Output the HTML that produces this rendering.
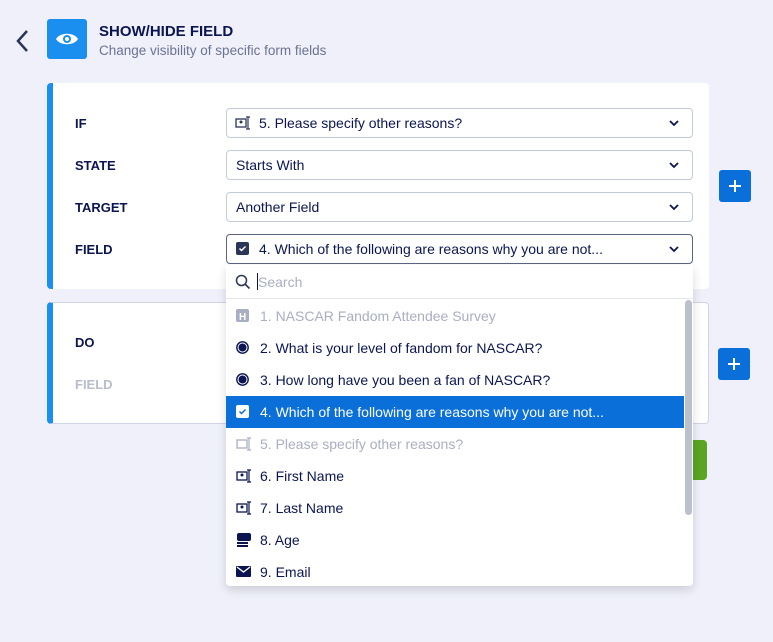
<!DOCTYPE html>
<html><head><style>
*{box-sizing:border-box;margin:0;padding:0}
body{width:773px;height:642px;background:#eff0fa;font-family:"Liberation Sans",sans-serif;color:#0a1551;position:relative;overflow:hidden}
.abs{position:absolute}
.card{position:absolute;left:47px;width:662px;background:#fff;border-radius:4px}
.lbl{position:absolute;left:75px;font-size:13px;font-weight:bold;color:#0a1551}
.sel{position:absolute;left:226px;width:467px;height:30px;border:1px solid #c3cad8;border-radius:4px;background:#fff;font-size:14px;line-height:28px;padding-left:9px;color:#0a1551}
.chev{position:absolute;right:13px;top:11px}
.plus{position:absolute;width:32px;height:32px;background:#0a6fd8;border-radius:3px}
.plus:before{content:"";position:absolute;left:10px;top:15px;width:12px;height:2px;background:#fff}
.plus:after{content:"";position:absolute;left:15px;top:10px;width:2px;height:12px;background:#fff}
.dd{position:absolute;left:226px;top:265px;width:467px;height:321px;background:#fff;border-radius:0 0 4px 4px;box-shadow:0 4px 10px rgba(0,0,0,.15);overflow:hidden}
.it{position:absolute;left:0;width:458px;height:32px;font-size:14px;line-height:32px;padding-left:34px}
.ic{position:absolute;left:10px;top:9px}
</style></head><body>
<svg class="abs" style="left:14px;top:29px" width="16" height="24"><path d="M13 2L4 12l9 10" stroke="#2a3557" stroke-width="2.5" fill="none"/></svg>
<div class="abs" style="left:47px;top:19px;width:40px;height:40px;background:#1a8ff0;border-radius:3px"></div>
<svg class="abs" style="left:55px;top:30px" width="24" height="18"><path d="M1 9C5 2 19 2 23 9C19 16 5 16 1 9Z" fill="#fff"/><circle cx="12" cy="9" r="4" fill="#1a8ff0"/><circle cx="12" cy="9" r="2" fill="#fff"/></svg>
<div class="abs" style="left:99px;top:23px;font-size:15px;font-weight:bold">SHOW/HIDE FIELD</div>
<div class="abs" style="left:99px;top:43px;font-size:13.5px;color:#6b7293">Change visibility of specific form fields</div>

<div class="card" style="top:83px;height:206px;border-left:6px solid #1a8ff0"></div>
<div class="lbl" style="top:116px">IF</div>
<div class="lbl" style="top:158px">STATE</div>
<div class="lbl" style="top:200px">TARGET</div>
<div class="lbl" style="top:242px">FIELD</div>
<div class="sel" style="top:108px;padding-left:32px"><svg class="ic" style="top:7px;left:8px" width="16" height="14"><rect x="1" y="3" width="10" height="8" fill="none" stroke="#2a3557" stroke-width="1.3"/><path d="M13 1v12M11 1h4M11 13h4" stroke="#2a3557" stroke-width="1.2"/><circle cx="6" cy="6" r="1.5" fill="#2a3557"/></svg>5. Please specify other reasons?<svg class="chev" width="10" height="7"><path d="M1 1l4 4 4-4" stroke="#0a1551" stroke-width="1.8" fill="none"/></svg></div>
<div class="sel" style="top:150px">Starts With<svg class="chev" width="10" height="7"><path d="M1 1l4 4 4-4" stroke="#0a1551" stroke-width="1.8" fill="none"/></svg></div>
<div class="sel" style="top:192px">Another Field<svg class="chev" width="10" height="7"><path d="M1 1l4 4 4-4" stroke="#0a1551" stroke-width="1.8" fill="none"/></svg></div>
<div class="sel" style="top:234px;border-color:#5c6484;padding-left:32px"><svg class="ic" style="top:7px;left:9px" width="14" height="14"><rect width="13" height="13" rx="2" fill="#2a3557"/><path d="M3.5 6.5l2 2 4-4" stroke="#fff" stroke-width="1.5" fill="none"/></svg>4. Which of the following are reasons why you are not...<svg class="chev" width="10" height="7"><path d="M1 1l4 4 4-4" stroke="#0a1551" stroke-width="1.8" fill="none"/></svg></div>
<div class="plus" style="left:719px;top:170px"></div>

<div class="card" style="top:302px;height:122px;border:1px solid #d0d4e4;border-left:6px solid #1a8ff0"></div>
<div class="lbl" style="top:335px">DO</div>
<div class="lbl" style="top:377px;color:#b8bccb">FIELD</div>
<div class="plus" style="left:718px;top:348px"></div>
<div class="abs" style="left:680px;top:440px;width:27px;height:40px;background:#5aa623;border-radius:4px"></div>

<div class="dd">
<div class="abs" style="left:0;top:0;width:467px;height:34px;border-bottom:1px solid #e3e6ef"></div>
<svg class="abs" style="left:9px;top:9px" width="16" height="16"><circle cx="6.5" cy="6.5" r="5" stroke="#2a3557" stroke-width="1.5" fill="none"/><path d="M10 10l4.5 4.5" stroke="#2a3557" stroke-width="1.6"/></svg>
<div class="abs" style="left:31px;top:8px;width:1px;height:17px;background:#0a1551"></div>
<div class="abs" style="left:32px;top:9px;font-size:14px;color:#a9aec2">Search</div>
<div class="it" style="top:35px;color:#a9aec2"><svg class="ic" width="14" height="14"><rect width="13" height="13" rx="2" fill="#a9aec2"/><text x="3" y="11" font-size="10" font-weight="bold" fill="#fff" font-family="Liberation Sans">H</text></svg>1. NASCAR Fandom Attendee Survey</div>
<div class="it" style="top:67px"><svg class="ic" width="14" height="14"><circle cx="6.5" cy="6.5" r="5.7" stroke="#0a1551" stroke-width="1.4" fill="none"/><circle cx="6.5" cy="6.5" r="4" fill="#0a1551"/></svg>2. What is your level of fandom for NASCAR?</div>
<div class="it" style="top:99px"><svg class="ic" width="14" height="14"><circle cx="6.5" cy="6.5" r="5.7" stroke="#0a1551" stroke-width="1.4" fill="none"/><circle cx="6.5" cy="6.5" r="4" fill="#0a1551"/></svg>3. How long have you been a fan of NASCAR?</div>
<div class="it" style="top:131px;background:#0a6fd8;color:#fff"><svg class="ic" width="14" height="14"><rect width="13" height="13" rx="2" fill="#fff"/><path d="M3.5 6.5l2 2 4-4" stroke="#0a6fd8" stroke-width="1.5" fill="none"/></svg>4. Which of the following are reasons why you are not...</div>
<div class="it" style="top:163px;color:#a9aec2"><svg class="ic" width="16" height="14"><rect x="1" y="3" width="10" height="8" fill="none" stroke="#a9aec2" stroke-width="1.3"/><path d="M13 1v12M11 1h4M11 13h4" stroke="#a9aec2" stroke-width="1.2"/></svg>5. Please specify other reasons?</div>
<div class="it" style="top:195px"><svg class="ic" width="16" height="14"><rect x="1" y="3" width="10" height="8" fill="none" stroke="#0a1551" stroke-width="1.3"/><path d="M13 1v12M11 1h4M11 13h4" stroke="#0a1551" stroke-width="1.2"/><circle cx="6" cy="6" r="1.5" fill="#0a1551"/></svg>6. First Name</div>
<div class="it" style="top:227px"><svg class="ic" width="16" height="14"><rect x="1" y="3" width="10" height="8" fill="none" stroke="#0a1551" stroke-width="1.3"/><path d="M13 1v12M11 1h4M11 13h4" stroke="#0a1551" stroke-width="1.2"/><circle cx="6" cy="6" r="1.5" fill="#0a1551"/></svg>7. Last Name</div>
<div class="it" style="top:259px"><svg class="ic" width="16" height="14"><rect x="1" y="0" width="14" height="8" rx="2" fill="#0a1551"/><rect x="1" y="9" width="11" height="2" fill="#0a1551"/><rect x="1" y="12" width="11" height="2" fill="#0a1551"/></svg>8. Age</div>
<div class="it" style="top:291px"><svg class="ic" style="top:10px" width="16" height="12"><rect x="0" y="0" width="15" height="11" rx="1" fill="#0a1551"/><path d="M1 1l6.5 5 6.5-5" stroke="#fff" stroke-width="1.4" fill="none"/></svg>9. Email</div>
<div class="abs" style="left:459px;top:35px;width:7px;height:215px;background:#bcc0cc;border-radius:4px"></div>
</div>
</body></html>
